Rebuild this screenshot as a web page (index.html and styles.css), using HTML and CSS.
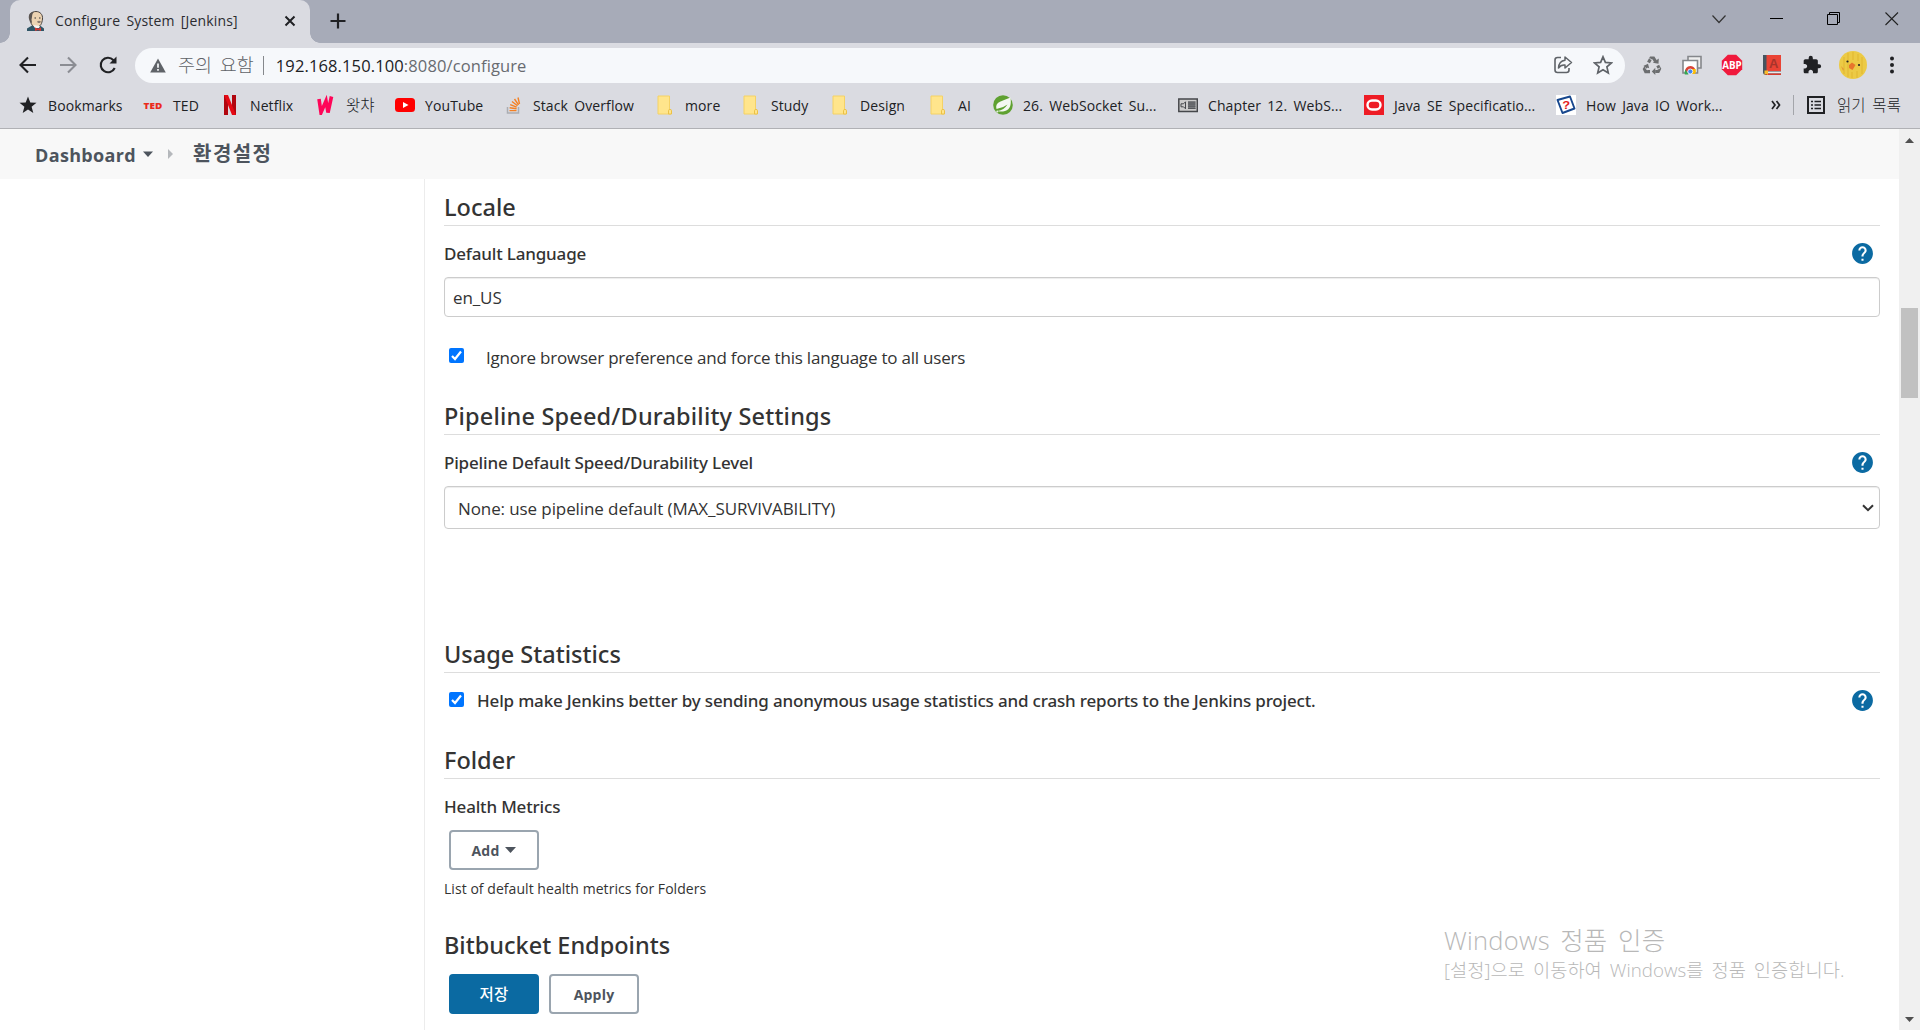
FILE: index.html
```html
<!DOCTYPE html>
<html lang="ko">
<head>
<meta charset="utf-8">
<title>Configure System [Jenkins]</title>
<link rel="stylesheet" href="styles.css">
</head>
<body>
<svg width="0" height="0" class="defs">
  <symbol id="folder" viewBox="0 0 20 20"><path d="M3 1h11.5v13.5l1.500 1V19H3z" fill="#ffe58c" stroke="#f5d265" stroke-width="1"/><path d="M13.500 19v-3.500q0-1 1.500-1t1.500 1V19z" fill="#ffe58c" stroke="#ecc146" stroke-width="1"/></symbol>
  <symbol id="help" viewBox="0 0 24 24"><path fill="#0b6aa2" d="M12 2C6.480 2 2 6.480 2 12s4.480 10 10 10 10-4.480 10-10S17.520 2 12 2zm1 17h-2v-2h2v2zm2.070-7.750l-.9.920C13.450 12.900 13 13.500 13 15h-2v-.5c0-1.100.45-2.100 1.170-2.830l1.240-1.260c.37-.36.59-.86.59-1.410 0-1.100-.9-2-2-2s-2 .9-2 2H8c0-2.210 1.790-4 4-4s4 1.790 4 4c0 .88-.36 1.680-.93 2.250z"/></symbol>
</svg>
<div class="window">
  <header class="tabstrip">
    <div class="tab">
      <svg class="favicon" width="20" height="20" viewBox="0 0 20 20"><path d="M1 20v-2.500l5-3 8 0 4 3V20z" fill="#2f5566"/><path d="M4 7C3 3 6 .5 10 .5s7 3 6.500 7.500-2 8-6 8-5.500-3-6-6z" fill="#ecd3b2" stroke="#3a3533" stroke-width=".9"/><path d="M3 8C2 3 5 .5 8 1 5.500 3 6.500 6 5.500 8.500L6 12 4 11z" fill="#5b5552"/><path d="M11 10.500q2-1.500 4 0l-1 1.500h-2z" fill="#8a7b70"/><path d="M8.500 7h1.500M13 7h1.500" stroke="#333" stroke-width="1"/><path d="M7 14l2 3h4l1-2" fill="#f5f5f5"/><path d="M9 16.500l3 1.200 3-1.200v3.500l-3-1-3 1z" fill="#d33833"/></svg>
      <span class="t tab-title">Configure System [Jenkins]</span>
      <svg class="tab-close" width="12" height="12" viewBox="0 0 12 12"><path d="M1.500 1.500l9 9M10.500 1.500l-9 9" stroke="#202124" stroke-width="2"/></svg>
    </div>
    <svg class="newtab" width="16" height="16" viewBox="0 0 16 16"><path d="M8 .5v15M.5 8h15" stroke="#202124" stroke-width="2.200"/></svg>
    <div class="controls">
      <svg width="58" height="38" viewBox="0 0 58 38"><path d="M22.500 15.500l6.500 7 6.500-7" fill="none" stroke="#333" stroke-width="1.200"/></svg>
      <svg width="58" height="38" viewBox="0 0 58 38"><path d="M22 18.500h13" stroke="#000"/></svg>
      <svg width="58" height="38" viewBox="0 0 58 38"><path d="M21.500 14.500h10v10h-10zM23.500 14v-1.500h10v10H32" fill="none" stroke="#000"/></svg>
      <svg width="56" height="38" viewBox="0 0 56 38"><path d="M21.500 12.500l12.500 12.500M34 12.500L21.500 25" stroke="#222" stroke-width="1.100"/></svg>
    </div>
  </header>

  <div class="toolbar">
    <div class="slot"><svg width="20" height="20" viewBox="0 0 20 20"><path d="M18 10H3M10 2.500L2.500 10l7.500 7.500" fill="none" stroke="#202124" stroke-width="2.100"/></svg></div>
    <div class="slot"><svg width="20" height="20" viewBox="0 0 20 20"><path d="M2 10h15M10 2.500l7.500 7.500-7.500 7.500" fill="none" stroke="#8b8d93" stroke-width="2.100"/></svg></div>
    <div class="slot"><svg width="20" height="20" viewBox="0 0 20 20"><path d="M16.700 13A7.300 7.300 0 1 1 15.300 4.900L17 6.700" fill="none" stroke="#202124" stroke-width="2.100"/><path d="M18.500 1.500v7h-7z" fill="#202124"/></svg></div>
    <div class="omnibox">
      <svg width="16" height="15" viewBox="0 0 16 15"><path d="M8 .5l7.800 14H.2z" fill="#5f6368"/><path d="M8 5.500v4.200M8 11v1.800" stroke="#f6f8fb" stroke-width="1.700"/></svg>
      <span class="t warn">주의 요함</span><i class="bar"></i>
      <span class="t url"><b>192.168.150.100</b>:8080/configure</span>
      <div class="omni-icons">
        <svg width="20" height="20" viewBox="0 0 20 20"><path d="M8 2.500H4.500q-2.500 0-2.500 2.500v10q0 2.500 2.500 2.500h9q2.500 0 2.500-2.500v-2" fill="none" stroke="#5f6368" stroke-width="1.600"/><path d="M12 2l6.500 5.500L12 13v-3Q8 9.500 5.500 13 6 6 12 5.300z" fill="none" stroke="#5f6368" stroke-width="1.500" stroke-linejoin="round"/></svg>
        <svg width="20" height="20" viewBox="0 0 20 20"><path d="M10 1.800l2.400 5.600 6.100.5-4.600 4 1.400 6L10 14.700 4.700 17.900l1.400-6-4.600-4 6.100-.5z" fill="none" stroke="#5f6368" stroke-width="1.700"/></svg>
      </div>
    </div>
    <div class="extensions">
      <div class="slot"><svg width="20" height="20" viewBox="0 0 20 20"><g fill="none" stroke="#6c6e70" stroke-width="3.200"><path d="M6.500 7.500L9 3h2.500l2 3.300"/><path d="M15.700 10.500l1.800 3.300-1.300 2.700h-3"/><path d="M8 16.700H3.700l-1.200-2.500L4.500 11"/></g><path d="M10.800 7.700l5.700 1 .3-5.300zM13.300 12.800v7.200l-3.500-3.600zM1.300 11L6 8.700l1.200 4.600z" fill="#6c6e70"/><path d="M7.500 3.500l3 1.700M15 14.500l3-1.500M3 12.500l2.500 2.300" stroke="#dadbe1" stroke-width=".9"/></svg></div>
      <div class="slot"><svg width="20" height="20" viewBox="0 0 20 20"><path d="M6 5V1.500h13V13h-3" fill="#eee" stroke="#85878b" stroke-width="1.600"/><path d="M1 5.500h14.500V18H1z" fill="#fff" stroke="#85878b" stroke-width="1.600"/><path d="M3 17.500a5.500 5.500 0 0 1 5.300-6.500 5.500 5.500 0 0 1 4.800 3z" fill="#db4437"/><path d="M3.500 14.500l3 5H2.800q-.8-2.800.7-5" fill="#35a853"/><path d="M9 14h4.700q.8 3-.8 5H8z" fill="#fbbc05"/><circle cx="8.300" cy="16.500" r="2.500" fill="#4285f4" stroke="#fff" stroke-width=".8"/></svg></div>
      <div class="slot"><svg width="22" height="22" viewBox="0 0 22 22"><path d="M6.800.8h8.400l6 6v8.400l-6 6H6.800l-6-6V6.800z" fill="#f0193c"/><text x="11" y="14.800" text-anchor="middle" class="abp" textLength="19.500" lengthAdjust="spacingAndGlyphs">ABP</text></svg></div>
      <div class="slot"><svg width="18" height="20" viewBox="0 0 18 20"><path d="M0 0h18v20H3q-3 0-3-3z" fill="#46545f"/><path d="M3.500 0H18v16H3.500z" fill="#ea4335"/><path d="M3 16.500h15v2H3z" fill="#e9e9e9"/><path d="M3 18.500h15V20H3z" fill="#d93a2e"/><path d="M1.500 15.500h3.500V20l-1.700-1.200L1.500 20z" fill="#fbbc2c"/><text x="10.700" y="12.800" text-anchor="middle" class="book-a">A</text></svg></div>
      <div class="slot"><svg width="20" height="20" viewBox="0 0 24 24"><path fill="#202124" d="M20.500 11H19V7c0-1.100-.9-2-2-2h-4V3.500a2.500 2.500 0 0 0-5 0V5H4c-1.100 0-1.990.9-1.990 2v3.800H3.500c1.490 0 2.700 1.210 2.700 2.700s-1.210 2.700-2.700 2.700H2V20c0 1.100.9 2 2 2h3.800v-1.500c0-1.490 1.210-2.700 2.700-2.700s2.700 1.210 2.700 2.700V22H17c1.100 0 2-.9 2-2v-4h1.500a2.500 2.500 0 0 0 0-5z"/></svg></div>
      <div class="slot avatar"><svg width="28" height="28" viewBox="0 0 28 28"><circle cx="14" cy="14" r="14" fill="#ecca45"/><path d="M5 6v17M9 2v24M14 1v8M19 3v7M23 6v17M18 20v7M13 21v6" stroke="#dfb52f" stroke-width="1.500" opacity=".6"/><path d="M10 14l3-2.500 3.500 2.500-3 5-3.500-2z" fill="#e8762c"/><circle cx="8.500" cy="10.500" r="1.100" fill="#222"/><circle cx="20" cy="14" r="1.100" fill="#222"/><path d="M2 15l3 3-1 2z" fill="#e49a35"/></svg></div>
      <div class="slot"><svg width="6" height="18" viewBox="0 0 6 18"><g fill="#202124"><circle cx="3" cy="2.500" r="2"/><circle cx="3" cy="9" r="2"/><circle cx="3" cy="15.500" r="2"/></g></svg></div>
    </div>
  </div>

  <nav class="bookmarks">
    <div class="bm"><svg width="20" height="20" viewBox="0 0 20 20"><path d="M10 1.500l2.300 6 6.200.3-4.900 4 1.700 6.200L10 14.500 4.700 18l1.700-6.200-4.900-4 6.200-.3z" fill="#202124"/></svg><span class="t">Bookmarks</span></div>
    <div class="bm"><svg width="20" height="20" viewBox="0 0 20 20"><text x="10" y="13.800" text-anchor="middle" class="ted" textLength="19" lengthAdjust="spacingAndGlyphs">TED</text></svg><span class="t">TED</span></div>
    <div class="bm"><svg width="20" height="20" viewBox="0 0 20 20"><path d="M4 0h4v20H4zM12 0h4v20h-4z" fill="#b1060f"/><path d="M4 0h4l8 20h-4z" fill="#e50914"/></svg><span class="t">Netflix</span></div>
    <div class="bm"><svg width="20" height="20" viewBox="0 0 20 20"><path d="M3 4l2 13.500L10 6l2 11.500L15.500 1.500" fill="none" stroke="#ff0558" stroke-width="3.600"/></svg><span class="t ko">왓챠</span></div>
    <div class="bm"><svg width="20" height="20" viewBox="0 0 20 20"><rect y="3" width="20" height="14" rx="3.500" fill="#f00"/><path d="M8 7l5.500 3L8 13z" fill="#fff"/></svg><span class="t">YouTube</span></div>
    <div class="bm"><svg width="20" height="20" viewBox="0 0 20 20"><path d="M4.500 12v6h11v-6" fill="none" stroke="#abadb2" stroke-width="1.500"/><path d="M6.500 15.600h7M6.600 12.800l7 1M7.200 9.700l6.500 2.500M9 6.500l5.500 4.300M11.500 4l4 5.800M15 2.500l1.500 6.500" stroke="#f48024" stroke-width="1.400"/></svg><span class="t">Stack Overflow</span></div>
    <div class="bm"><svg width="20" height="20"><use href="#folder"/></svg><span class="t">more</span></div>
    <div class="bm"><svg width="20" height="20"><use href="#folder"/></svg><span class="t">Study</span></div>
    <div class="bm"><svg width="20" height="20"><use href="#folder"/></svg><span class="t">Design</span></div>
    <div class="bm"><svg width="20" height="20"><use href="#folder"/></svg><span class="t">AI</span></div>
    <div class="bm"><svg width="20" height="20" viewBox="0 0 20 20"><circle cx="10" cy="10" r="9.800" fill="#5fa131"/><path d="M17.500 2.500C18.500 9 17.500 14.500 12 16q-4 1-7.500 0 6.500-1 10-6.500-4.500 3.500-11 4.500Q2 9 7 6.800T17.500 2.500z" fill="#f4f8f0"/><circle cx="4.300" cy="16.500" r="1" fill="#e5efdf"/></svg><span class="t">26. WebSocket Su...</span></div>
    <div class="bm"><svg width="20" height="20" viewBox="0 0 20 20"><rect x=".8" y="4" width="18.500" height="12.500" fill="#ccc" stroke="#45474b" stroke-width="1.500"/><path d="M3 8.800h2.500l2-2v7l-2-2H3z" fill="none" stroke="#45474b"/><path d="M10 6.500h7.500v7.500H10z" fill="#77797d"/><path d="M10 7h7.500M10 9h7.500M10 11.200h7.500M10 13.500h7.500" stroke="#55575b"/></svg><span class="t">Chapter 12. WebS...</span></div>
    <div class="bm"><svg width="20" height="20" viewBox="0 0 20 20"><path d="M0 0h20v20H0z" fill="#ee1c25"/><rect x="3.500" y="5.500" width="13" height="9" rx="4.500" fill="none" stroke="#fff" stroke-width="2.400"/></svg><span class="t">Java SE Specificatio...</span></div>
    <div class="bm"><svg width="20" height="20" viewBox="0 0 20 20"><path d="M0 0h20v20H0z" fill="#fff"/><path d="M1.500 5L14 1.500 18.500 13.500 6.500 18z" fill="#fff" stroke="#17478e" stroke-width="1.900" stroke-linejoin="round"/><text x="10.300" y="14" text-anchor="middle" class="q" textLength="8" lengthAdjust="spacingAndGlyphs">?</text></svg><span class="t">How Java IO Work...</span></div>
    <div class="more"><svg width="10" height="10" viewBox="0 0 10 10"><path d="M1 1l3 4-3 4M5.500 1l3 4-3 4" fill="none" stroke="#202124" stroke-width="1.700"/></svg></div>
    <div class="reading"><svg width="18" height="18" viewBox="0 0 18 18"><path d="M1 1h16v16H1z" fill="none" stroke="#202124" stroke-width="2"/><path d="M4 5.500h2M4 9h2M4 12.500h2M7.500 5.500H14M7.500 9H14M7.500 12.500H14" stroke="#202124" stroke-width="1.700"/></svg><span class="t ko">읽기 목록</span></div>
  </nav>

  <div class="viewport">
    <div class="page">
      <div class="crumbs">
        <span class="t">Dashboard</span><svg class="caret" width="10" height="6" viewBox="0 0 10 6"><path d="M0 .5h10L5 6z" fill="#4d545d"/></svg>
        <svg class="sep" width="5" height="10" viewBox="0 0 5 10"><path d="M0 0l5 5-5 5z" fill="#b5b8bc"/></svg><span class="t current">환경설정</span>
      </div>
      <div class="body">
        <aside class="side"></aside>
        <main class="main">
          <section class="locale">
            <h2><span class="t">Locale</span></h2>
            <div class="row"><span class="t">Default Language</span><svg width="25" height="25"><use href="#help"/></svg></div>
            <div class="input"><span class="t">en_US</span></div>
            <label class="check loose"><i class="box"><svg width="15" height="15" viewBox="0 0 15 15"><path d="M3 8l3 3 6-7.500" fill="none" stroke="#fff" stroke-width="2.200"/></svg></i><span class="t">Ignore browser preference and force this language to all users</span></label>
          </section>
          <section class="pipeline">
            <h2><span class="t wide">Pipeline Speed/Durability Settings</span></h2>
            <div class="row"><span class="t">Pipeline Default Speed/Durability Level</span><svg width="25" height="25"><use href="#help"/></svg></div>
            <div class="input select"><span class="t">None: use pipeline default (MAX_SURVIVABILITY)</span><svg width="12" height="8" viewBox="0 0 12 8"><path d="M1 1.200l5 5 5-5" fill="none" stroke="#333" stroke-width="2"/></svg></div>
          </section>
          <section class="usage">
            <h2><span class="t">Usage Statistics</span></h2>
            <div class="row"><label class="check"><i class="box"><svg width="15" height="15" viewBox="0 0 15 15"><path d="M3 8l3 3 6-7.500" fill="none" stroke="#fff" stroke-width="2.200"/></svg></i><span class="t">Help make Jenkins better by sending anonymous usage statistics and crash reports to the Jenkins project.</span></label><svg width="25" height="25"><use href="#help"/></svg></div>
          </section>
          <section class="folder">
            <h2><span class="t">Folder</span></h2>
            <div class="row"><span class="t">Health Metrics</span></div>
            <div class="btn add"><span class="t">Add</span><svg width="11" height="6" viewBox="0 0 11 6"><path d="M0 0h11L5.500 6z" fill="#4d545d"/></svg></div>
            <p class="desc"><span class="t">List of default health metrics for Folders</span></p>
          </section>
          <section class="bitbucket"><h2><span class="t">Bitbucket Endpoints</span></h2></section>
          <div class="actions"><div class="btn primary"><span class="t">저장</span></div><div class="btn"><span class="t">Apply</span></div></div>
        </main>
      </div>
    </div>
    <div class="scrollbar">
      <svg width="9" height="5" viewBox="0 0 9 5"><path d="M4.500 0L9 5H0z" fill="#505050"/></svg>
      <div class="thumb"></div>
      <svg width="9" height="5" viewBox="0 0 9 5"><path d="M0 0h9L4.500 5z" fill="#505050"/></svg>
    </div>
  </div>
</div>
<div class="watermark"><div class="t wm-title">Windows 정품 인증</div><div class="t wm-text">[설정]으로 이동하여 Windows를 정품 인증합니다.</div></div>
</body>
</html>
```
FILE: styles.css
```css
* { box-sizing: border-box; }
body {
  margin: 0;
  width: 1920px;
  height: 1030px;
  overflow: hidden;
  background: #fff;
  color: #333;
  font-family: "Open Sans", "Noto Sans CJK KR", sans-serif;
}
svg { display: block; flex: none; }
.defs { position: absolute; }
.t { white-space: nowrap; }
.window { display: flex; flex-direction: column; height: 1030px; }

/* Browser tab strip */
.tabstrip { display: flex; height: 43px; background: #a7abb8; padding-left: 10px; }
.tab {
  position: relative;
  display: flex;
  align-items: center;
  width: 300px;
  padding: 0 14px 2px 16px;
  background: #dadbe1;
  border-radius: 10px 10px 0 0;
}
.tab::before, .tab::after {
  content: "";
  position: absolute;
  bottom: 0;
  width: 10px;
  height: 10px;
}
.tab::before { left: -10px; background: radial-gradient(circle at 0 0, #a7abb8 9.500px, #dadbe1 10px); }
.tab::after { right: -10px; background: radial-gradient(circle at 100% 0, #a7abb8 9.500px, #dadbe1 10px); }
.tab-title { margin-left: 9px; font-size: 14px; letter-spacing: .15px; word-spacing: 2.500px; color: #2b2c30; }
.tab-close { margin-left: auto; }
.newtab { margin: 13px 0 0 20px; }
.controls { display: flex; margin-left: auto; }

/* Address bar */
.toolbar { display: flex; align-items: center; height: 45px; background: #dadbe1; padding: 0 8px 1px; }
.slot { display: flex; justify-content: center; align-items: center; width: 40px; height: 44px; }
.avatar { padding-left: 2px; }
.omnibox {
  display: flex;
  align-items: center;
  width: 1491px;
  height: 35px;
  margin: 1px 0 0 7px;
  padding: 0 12px 1px 15px;
  border-radius: 18px;
  background: #f6f8fb;
}
.warn { margin-left: 12px; font-size: 18.500px; line-height: 24px; padding-bottom: 1px; word-spacing: 3px; font-weight: 300; color: #5f6368; }
.bar { width: 1px; height: 19px; margin: 0 12px 0 9px; background: #85888c; }
.url { font-size: 16.500px; letter-spacing: .12px; color: #686b70; }
.url b { font-weight: 400; color: #202124; }
.omni-icons { display: flex; gap: 20px; margin-left: auto; }
.extensions { display: flex; margin-left: 7px; }
.abp { font: 700 10px "Open Sans", sans-serif; fill: #fff; }
.book-a { font: 700 13px "Liberation Sans", sans-serif; fill: #a7342b; }

/* Bookmarks bar */
.bookmarks {
  display: grid;
  grid-template-columns: 125px 77px 96px 79px 108px 152px 86px 89px 98px 65px 185px 186px 192px 215px 22px 1fr;
  align-items: center;
  height: 41px;
  padding: 0 0 6px 18px;
  background: #dadbe1;
  border-bottom: 1px solid #b0b1b5;
}
.bm, .reading { display: flex; align-items: center; gap: 10px; font-size: 14px; letter-spacing: .1px; word-spacing: 2.500px; color: #202124; }
.ko { font-size: 15.500px; font-weight: 300; line-height: 20px; }
.reading { height: 20px; padding-left: 13px; gap: 12px; border-left: 1px solid #a3a5aa; }
.ted { font: 800 9px "Open Sans", sans-serif; fill: #eb2a1c; }
.q { font: 700 11px "Liberation Sans", sans-serif; fill: #e32119; }

/* Page */
.viewport { display: flex; flex: 1; min-height: 0; }
.page { display: flex; flex-direction: column; flex: 1; }
.crumbs { display: flex; align-items: center; height: 50px; padding-left: 35px; background: #f8f8f8; color: #4d545d; font-size: 18px; font-weight: 700; }
.crumbs > .t { padding-top: 2px; letter-spacing: .35px; }
.crumbs .current { font-size: 20px; font-weight: 700; letter-spacing: 1.400px; line-height: 30px; padding: 0 0 1px; }
.caret { margin-left: 7px; }
.sep { margin: 0 20px 0 15px; }
.body { display: flex; flex: 1; min-height: 0; }
.side { width: 424px; }
.main { flex: 1; padding: 7px 19px 0 19px; border-left: 1px solid #ececec; }
h2 { display: flex; align-items: center; height: 40px; margin: 0; padding-top: 2px; border-bottom: 1px solid #ddd; font-family: "Noto Sans", sans-serif; font-size: 23.500px; font-weight: 500; line-height: 32px; }
.wide { letter-spacing: .18px; }
.row { display: flex; align-items: center; justify-content: space-between; height: 51px; padding: 3px 5px 0 0; font-family: "Noto Sans", sans-serif; font-size: 17px; font-weight: 500; letter-spacing: -.17px; }
.row .t { padding-top: 1px; }
.input { display: flex; align-items: center; height: 40px; padding: 0 8px; border: 1px solid #ccc; border-radius: 4px; box-shadow: inset 0 1px 1px rgba(0,0,0,.075); font-size: 17px; letter-spacing: -.1px; }
.select { height: 43px; padding: 1px 5px 0 13px; justify-content: space-between; }
.check { display: flex; align-items: center; padding-left: 5px; gap: 13px; }
.loose { margin-top: 28px; gap: 22px; height: 24px; font-size: 17px; letter-spacing: -.21px; }
.box { width: 15px; height: 15px; margin-bottom: 3px; border-radius: 2px; background: #0075ff; }
.row .box { margin-bottom: 1px; }
.locale { height: 209px; }
.pipeline { height: 238px; }
.usage { height: 106px; }
.folder { height: 185px; }
.bitbucket { height: 33px; overflow: hidden; }
.btn { display: flex; align-items: center; justify-content: center; gap: 6px; width: 90px; height: 40px; border: 2px solid #9aa5af; border-radius: 4px; background: #fff; color: #4d545d; font-size: 14px; font-weight: 700; letter-spacing: .2px; }
.add { margin-left: 5px; }
.primary { background: #0b6aa2; border-color: #0b6aa2; color: #fff; font-weight: 500; font-size: 15.500px; padding-bottom: 2px; }
.desc { margin: 8px 0 0; font-size: 14px; letter-spacing: .05px; line-height: 22px; }
.actions { display: flex; gap: 10px; padding: 17px 0 0 5px; }

.scrollbar { display: flex; flex-direction: column; align-items: center; width: 21px; padding: 9px 0 8px; background: #f0f0f0; }
.thumb { width: 17px; height: 90px; margin: 165px 0 auto; background: #c1c1c1; }

/* Activation notice floating above every window */
.watermark { position: absolute; left: 1444px; top: 922px; color: #b8b8b8; font-weight: 300; }
.wm-title { font-size: 25.500px; line-height: 36px; letter-spacing: .25px; word-spacing: 3.500px; }
.wm-text { font-size: 18.700px; line-height: 24px; letter-spacing: .05px; word-spacing: 3px; }
```
